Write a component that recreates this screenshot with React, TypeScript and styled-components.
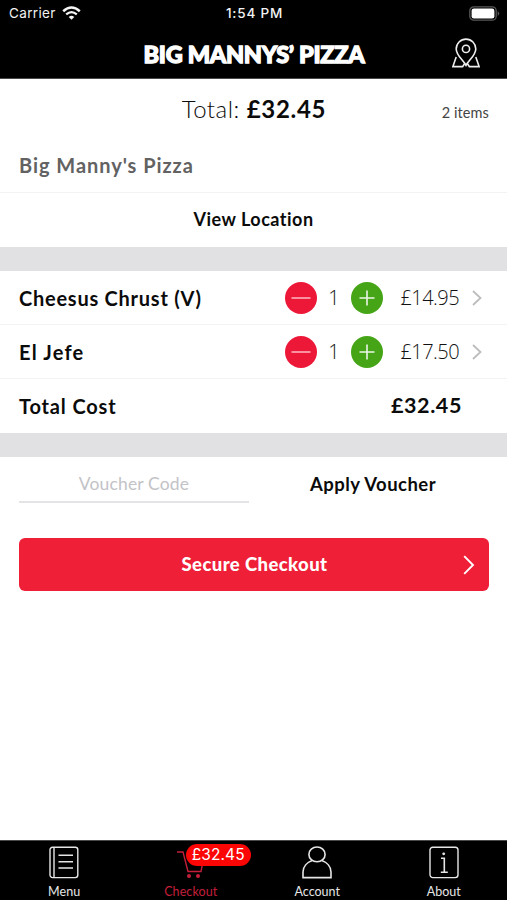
import React from "react";
import styled, { createGlobalStyle } from "styled-components";

const GlobalStyle = createGlobalStyle`
  * { box-sizing: border-box; }
  body { margin: 0; background: #fff; font-family: Lato, "Open Sans", sans-serif; }
  button, input { font: inherit; border: 0; padding: 0; background: none; }
  svg { display: block; flex: none; }
`;

const Screen = styled.div`
  width: 507px;
  height: 900px;
  display: flex;
  flex-direction: column;
  background: #fff;
  color: #0b0b0b;
  overflow: hidden;
`;

const Label = styled.span<{ $size: number; $weight?: number; $track?: number; $color?: string }>`
  font-size: ${(p) => p.$size}px;
  font-weight: ${(p) => p.$weight ?? 400};
  letter-spacing: ${(p) => p.$track ?? 0}px;
  color: ${(p) => p.$color ?? "inherit"};
  line-height: 1.2;
  white-space: nowrap;
`;

const Figure = styled(Label)`
  font-family: "Open Sans", Lato, sans-serif;
`;

const StatusBar = styled.div`
  height: 27px;
  flex: none;
  display: grid;
  grid-template-columns: 1fr auto 1fr;
  align-items: center;
  padding: 0 7px 0 9px;
  background: #000;
  color: #f2f2f2;
  font-family: Inter, sans-serif;
`;

const StatusGroup = styled.div<{ $end?: boolean }>`
  display: flex;
  align-items: center;
  gap: 6px;
  justify-content: ${(p) => (p.$end ? "flex-end" : "flex-start")};
`;

const Header = styled.header`
  height: 52px;
  flex: none;
  display: grid;
  grid-template-columns: 60px 1fr 60px;
  align-items: center;
  padding: 0 11px;
  background: #000;
  border-bottom: 1px solid #4a4a4a;
`;

const Brand = styled.h1`
  margin: 3px 0 0;
  padding-left: 1px;
  text-align: center;
  color: #fff;
  font-size: 23.5px;
  line-height: 28px;
  font-weight: 900;
  letter-spacing: -0.3px;
  white-space: nowrap;
  -webkit-text-stroke: 1.3px #fff;
`;

const IconButton = styled.button`
  display: flex;
  justify-content: center;
`;

const TotalBar = styled.section`
  height: 59px;
  flex: none;
  display: grid;
  grid-template-columns: 1fr auto 1fr;
  align-items: baseline;
  padding: 16px 18px 0 19px;
`;

const TotalText = styled.div`
  display: flex;
  align-items: baseline;
  gap: 7px;
`;

const ItemCount = styled.div`
  text-align: right;
`;

const Row = styled.div<{ $height: number; $center?: boolean; $last?: boolean }>`
  height: ${(p) => p.$height}px;
  flex: none;
  display: flex;
  align-items: center;
  justify-content: ${(p) => (p.$center ? "center" : "space-between")};
  padding: 0 19px;
  border-bottom: ${(p) => (p.$last ? "0" : "1px solid #f3f3f4")};
`;

const Divider = styled.div`
  height: 24px;
  flex: none;
  background: #e1e1e4;
`;

const Stepper = styled.div`
  display: grid;
  grid-template-columns: 32px 34px 32px 76px 23px;
  align-items: center;
  margin-right: 6px;
`;

const Quantity = styled.div`
  text-align: center;
`;

const Price = styled.div`
  text-align: right;
`;

const Chevron = styled.div`
  display: flex;
  justify-content: flex-end;
`;

const TotalCost = styled.div`
  margin-right: 26px;
`;

const VoucherRow = styled.div`
  height: 81px;
  flex: none;
  display: grid;
  grid-template-columns: 230px 1fr;
  align-items: start;
  padding: 0 19px;
`;

const VoucherInput = styled.input`
  width: 100%;
  height: 46px;
  padding-top: 8px;
  border-bottom: 2px solid #e4e4e6;
  text-align: center;
  font-size: 17.5px;
  letter-spacing: 0.15px;
  outline: 0;
  &::placeholder { color: #c3c3c7; opacity: 1; }
`;

const ApplyButton = styled.button`
  height: 46px;
  padding: 8px 0 0 9px;
  color: #0b0b0b;
`;

const CheckoutButton = styled.button`
  height: 53px;
  flex: none;
  margin: 0 18px 0 19px;
  padding: 0 13px 0 14px;
  border-radius: 6px;
  background: #ef1f38;
  color: #fff;
  display: grid;
  grid-template-columns: 13px 1fr 13px;
  align-items: center;
`;

const TabBar = styled.nav`
  height: 60px;
  flex: none;
  margin-top: auto;
  display: grid;
  grid-template-columns: repeat(4, 126.5px);
  background: #000;
  border-top: 1px solid #4a4a4a;
`;

const Tab = styled.div<{ $color: string }>`
  display: flex;
  flex-direction: column;
  align-items: center;
  gap: 5px;
  padding: 5px 0 0 2px;
  color: ${(p) => p.$color};
`;

const TabIcon = styled.div`
  position: relative;
  height: 33px;
`;

const Badge = styled.span`
  position: absolute;
  left: 10px;
  top: -2px;
  height: 22px;
  width: 65px;
  border-radius: 11px;
  background: #fb0505;
  color: #fff;
  text-align: center;
  font: 400 15.5px/22px Inter, sans-serif;
  letter-spacing: 0.1px;
`;

const Wifi = () => (
  <svg width="19" height="15" viewBox="0 0 19 15" fill="none" stroke="#f4f4f4">
    <path d="M1.2 5.2Q9.5 -2.2 17.8 5.2" strokeWidth="2.5" />
    <path d="M4.2 8.4Q9.5 3.8 14.8 8.4" strokeWidth="2.3" />
    <path d="M6.7 10.9Q9.5 8.5 12.3 10.9L9.5 13.8Z" fill="#f4f4f4" stroke="none" />
  </svg>
);

const Battery = () => (
  <svg width="31" height="15" viewBox="0 0 31 15">
    <rect x="0.8" y="0.8" width="26.4" height="13.4" rx="4" fill="none" stroke="#59595b" strokeWidth="1.3" />
    <rect x="2.6" y="2.5" width="22.8" height="10" rx="2.3" fill="#fff" />
    <path d="M28.7 5.1Q31.7 7.5 28.7 9.9Z" fill="#59595b" />
  </svg>
);

const MapPin = () => (
  <svg width="28" height="30" viewBox="0 0 28 30" fill="none" stroke="#eee" strokeWidth="1.6">
    <path d="M14 27.3C11.5 22.5 4.2 17.3 4.2 10.9A9.8 9.8 0 0 1 23.8 10.9C23.8 17.3 16.5 22.5 14 27.3Z" />
    <circle cx="14" cy="10.9" r="3.6" />
    <path d="M4.2 19L.9 28.6H10.6L12.7 25.5M23.8 19L27.1 28.6H17.4L15.3 25.5" />
  </svg>
);

const StepIcon = ({ plus }: { plus?: boolean }) => (
  <svg width="32" height="32" viewBox="0 0 32 32">
    <circle cx="16" cy="16" r="16" fill={plus ? "#46a517" : "#ed1738"} />
    {plus ? (
      <path d="M8.5 16H23.5M16 8.5V23.5" stroke="#ecf6e8" strokeWidth="1.6" />
    ) : (
      <path d="M6.5 16H25.5" stroke="#ffc5cd" strokeWidth="1.4" />
    )}
  </svg>
);

const RowChevron = () => (
  <svg width="10" height="16" viewBox="0 0 10 16" fill="none" stroke="#bdbdc0" strokeWidth="1.8">
    <path d="M1 1L8.5 8L1 15" />
  </svg>
);

const ButtonChevron = () => (
  <svg width="12" height="20" viewBox="0 0 12 20" fill="none" stroke="#fff" strokeWidth="1.9">
    <path d="M1.2 1.2L10 10L1.2 18.8" />
  </svg>
);

const MenuIcon = () => (
  <svg width="30" height="33" viewBox="0 0 30 33" fill="none" stroke="currentColor" strokeWidth="1.4">
    <rect x="1" y="1.2" width="27.8" height="30.4" rx="2.5" />
    <path d="M5 1.2V31.6M9.5 9.3H24M9.5 15.7H24M9.5 22H24" />
  </svg>
);

const CartIcon = () => (
  <svg width="30" height="33" viewBox="0 0 30 33" fill="none" stroke="currentColor" strokeWidth="1.4">
    <path d="M1 6H7L12 25.5H25L28 10" />
    <circle cx="13" cy="30" r="1.3" fill="currentColor" />
    <circle cx="22" cy="30" r="1.3" fill="currentColor" />
  </svg>
);

const PersonIcon = () => (
  <svg width="30" height="33" viewBox="0 0 30 33" fill="none" stroke="currentColor" strokeWidth="1.6">
    <ellipse cx="15" cy="8.4" rx="8.1" ry="7.4" />
    <path d="M10.2 14.6C5 16.4 1 20.7 1 26V31.6H29V26C29 20.7 25 16.4 19.8 14.6" />
  </svg>
);

const InfoIcon = () => (
  <svg width="30" height="33" viewBox="0 0 30 33" fill="none" stroke="currentColor" strokeWidth="1.4">
    <rect x="1" y="1.2" width="28" height="30.4" rx="2.8" />
    <path d="M12 12.3H15.3V26M11.8 26.3H18.8" strokeWidth="1.6" />
    <circle cx="14.7" cy="7.8" r="1.4" fill="currentColor" stroke="none" />
  </svg>
);

const items = [
  { name: "Cheesus Chrust (V)", price: "£14.95", track: 0.75 },
  { name: "El Jefe", price: "£17.50", track: 1.2 },
];

export default function App() {
  return (
    <Screen>
      <GlobalStyle />
      <StatusBar>
        <StatusGroup>
          <Label $size={13.5} $track={0.35}>Carrier</Label>
          <Wifi />
        </StatusGroup>
        <Label $size={13.5} $weight={500} $track={0.8}>1:54 PM</Label>
        <StatusGroup $end><Battery /></StatusGroup>
      </StatusBar>
      <Header>
        <span />
        <Brand>BIG MANNYS’ PIZZA</Brand>
        <IconButton aria-label="Locations"><MapPin /></IconButton>
      </Header>

      <TotalBar>
        <span />
        <TotalText>
          <Label $size={24} $weight={300} $track={0.5}>Total:</Label>
          <Label $size={24} $weight={700} $track={0.7}>£32.45</Label>
        </TotalText>
        <ItemCount><Label $size={14.5} $color="#444" $track={0.1}>2 items</Label></ItemCount>
      </TotalBar>
      <Row $height={55}>
        <Label $size={20} $weight={700} $color="#626262" $track={0.95}>Big Manny's Pizza</Label>
      </Row>
      <Row $height={54} $center $last>
        <Label $size={18} $weight={700} $track={0.5}>View Location</Label>
      </Row>
      <Divider />

      {items.map((item) => (
        <Row key={item.name} $height={54}>
          <Label $size={20} $weight={700} $track={item.track}>{item.name}</Label>
          <Stepper>
            <StepIcon />
            <Quantity><Figure $size={20} $weight={300} $color="#111">1</Figure></Quantity>
            <StepIcon plus />
            <Price><Figure $size={20} $weight={300} $track={-0.55} $color="#111">{item.price}</Figure></Price>
            <Chevron><RowChevron /></Chevron>
          </Stepper>
        </Row>
      ))}
      <Row $height={54} $last>
        <Label $size={20} $weight={700} $track={0.85}>Total Cost</Label>
        <TotalCost><Label $size={21.5} $weight={700} $track={0.6}>£32.45</Label></TotalCost>
      </Row>
      <Divider />

      <VoucherRow>
        <VoucherInput placeholder="Voucher Code" />
        <ApplyButton><Label $size={18.5} $weight={700} $track={0.45}>Apply Voucher</Label></ApplyButton>
      </VoucherRow>
      <CheckoutButton>
        <span />
        <Label $size={18.5} $weight={900} $track={0.4}>Secure Checkout</Label>
        <ButtonChevron />
      </CheckoutButton>

      <TabBar>
        <Tab $color="#e6e6e6">
          <TabIcon><MenuIcon /></TabIcon>
          <Label $size={12.5} $track={0.1}>Menu</Label>
        </Tab>
        <Tab $color="#c41f3a">
          <TabIcon>
            <CartIcon />
            <Badge>£32.45</Badge>
          </TabIcon>
          <Label $size={12.5} $track={0.1}>Checkout</Label>
        </Tab>
        <Tab $color="#e6e6e6">
          <TabIcon><PersonIcon /></TabIcon>
          <Label $size={12.5} $track={0}>Account</Label>
        </Tab>
        <Tab $color="#e6e6e6">
          <TabIcon><InfoIcon /></TabIcon>
          <Label $size={12.5} $track={0}>About</Label>
        </Tab>
      </TabBar>
    </Screen>
  );
}
